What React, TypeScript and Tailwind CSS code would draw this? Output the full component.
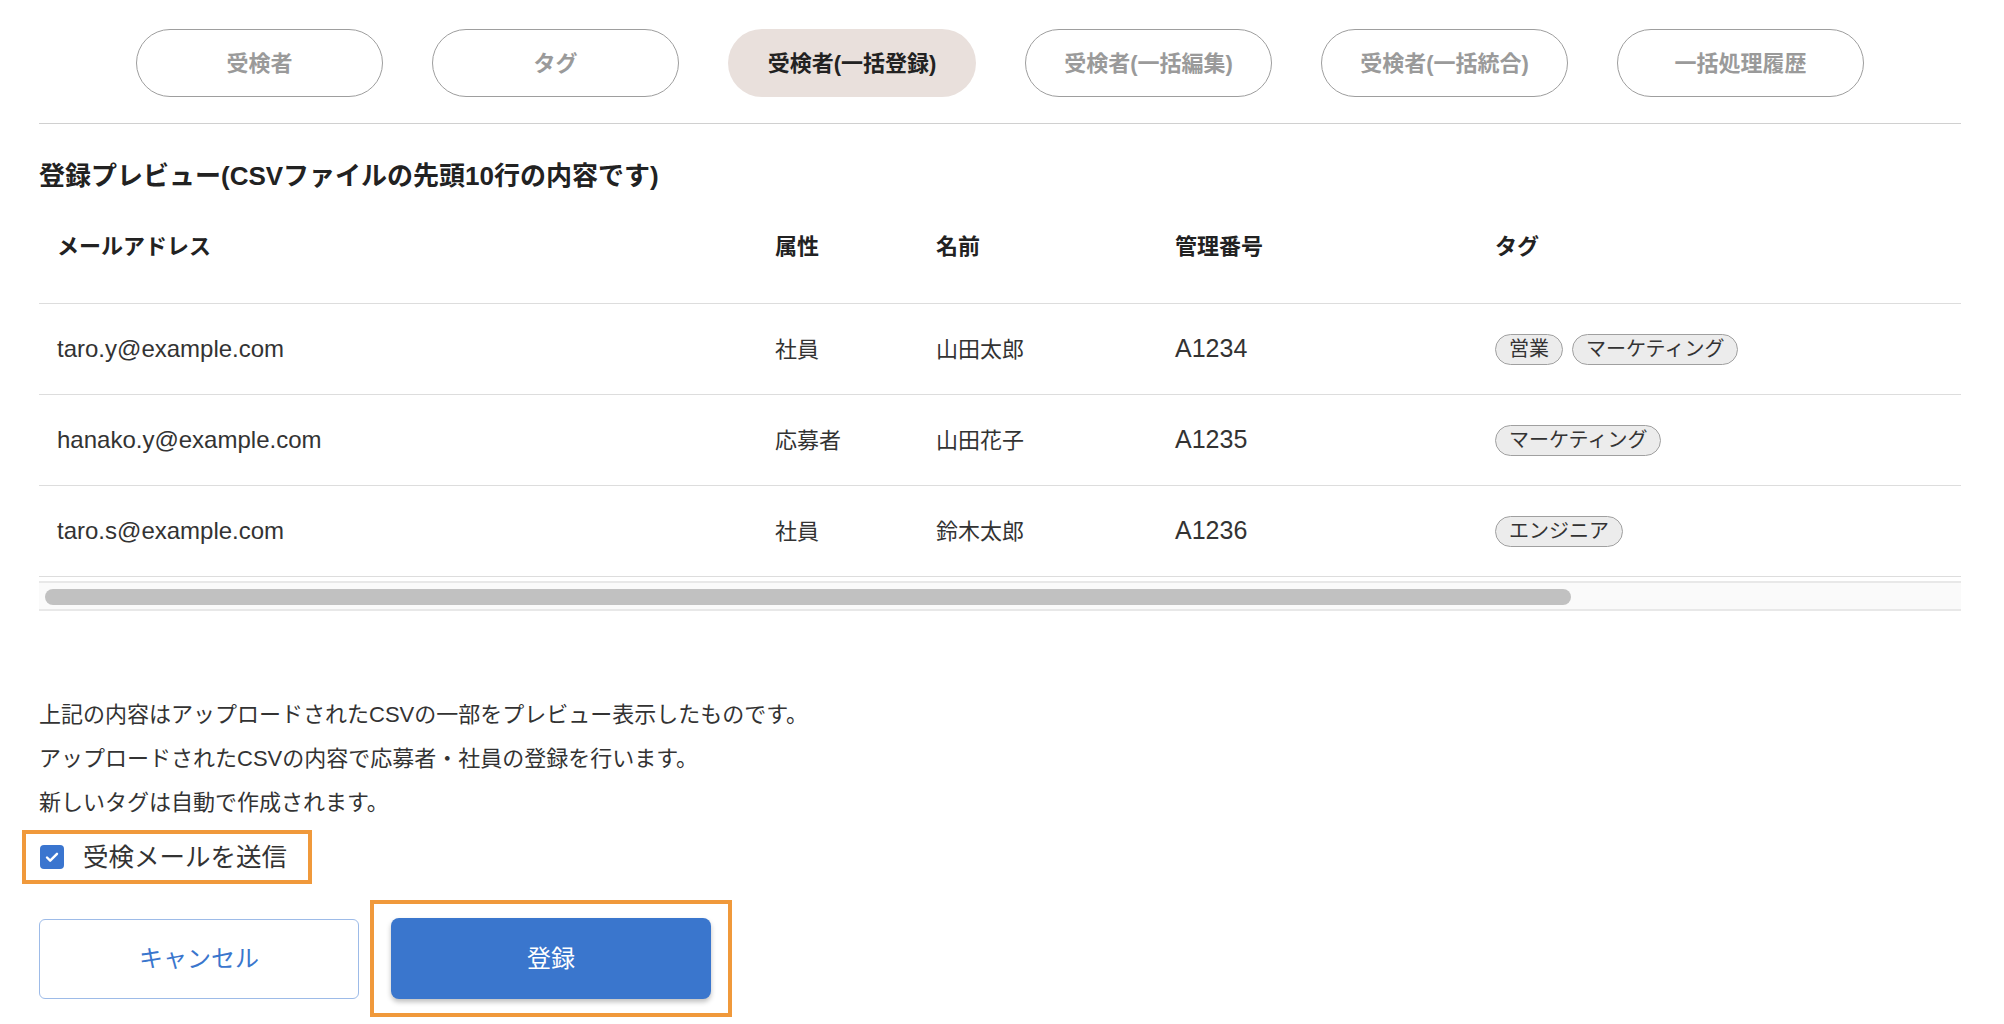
const font = { fontFamily: '"Liberation Sans", "Noto Sans CJK JP", sans-serif' };

const tabs = ['受検者', 'タグ', '受検者(一括登録)', '受検者(一括編集)', '受検者(一括統合)', '一括処理履歴'];

type Row = { email: string; kind: string; name: string; code: string; tags: string[] };

const rows: Row[] = [
  { email: 'taro.y@example.com', kind: '社員', name: '山田太郎', code: 'A1234', tags: ['営業', 'マーケティング'] },
  { email: 'hanako.y@example.com', kind: '応募者', name: '山田花子', code: 'A1235', tags: ['マーケティング'] },
  { email: 'taro.s@example.com', kind: '社員', name: '鈴木太郎', code: 'A1236', tags: ['エンジニア'] },
];

function Tabs() {
  return (
    <div className="flex justify-center gap-[49px] pt-[29px] pb-[26px] border-b border-[#d0d0d0]">
      {tabs.map((t, i) =>
        i === 2 ? (
          <div
            key={t}
            className="flex h-[68px] w-[248px] items-center justify-center rounded-full bg-[#e9e0dc] text-[22px] font-bold text-[#222]"
          >
            {t}
          </div>
        ) : (
          <div
            key={t}
            className="flex h-[68px] w-[247px] items-center justify-center rounded-full border border-[#9e9e9e] text-[22px] font-bold text-[#9a9a9a]"
          >
            {t}
          </div>
        ),
      )}
    </div>
  );
}

function Cols({ cells, className }: { cells: React.ReactNode[]; className: string }) {
  return (
    <div className={`flex items-center ${className}`}>
      <div className="w-[718px] pl-[18px]">{cells[0]}</div>
      <div className="w-[161px] pl-[18px]">{cells[1]}</div>
      <div className="w-[240px] pl-[18px]">{cells[2]}</div>
      <div className="w-[321px] pl-[17px]">{cells[3]}</div>
      <div className="flex-1 pl-[16px]">{cells[4]}</div>
    </div>
  );
}

function Chip({ label }: { label: string }) {
  return (
    <span className="inline-flex h-[31px] items-center rounded-full border border-[#a0a0a0] bg-[#ececec] px-[13px] text-[20px] leading-none text-[#333]">
      {label}
    </span>
  );
}

function Preview() {
  return (
    <div>
      <h2 className="mt-[33px] text-[26px] font-bold leading-[39px] text-[#222]">
        登録プレビュー(CSVファイルの先頭10行の内容です)
      </h2>
      <Cols
        className="h-[107px] pb-[6px] text-[22px] font-bold text-[#222]"
        cells={['メールアドレス', '属性', '名前', '管理番号', 'タグ']}
      />
      {rows.map((r) => (
        <Cols
          key={r.email}
          className="h-[91px] border-t border-[#dddddd] text-[22px] text-[#333]"
          cells={[
            <span className="text-[24px]">{r.email}</span>,
            r.kind,
            r.name,
            <span className="text-[25px]">{r.code}</span>,
            <div className="flex gap-[9px]">
              {r.tags.map((t) => (
                <Chip key={t} label={t} />
              ))}
            </div>,
          ]}
        />
      ))}
      <div className="border-t border-[#dddddd] pt-[4px]">
        <div className="h-[30px] border-y-2 border-[#e8e8e8] bg-[#fafafa] pl-[6px] pt-[6px]">
          <div className="h-[16px] w-[1526px] rounded-full bg-[#c1c1c1]" />
        </div>
      </div>
    </div>
  );
}

function Footer() {
  return (
    <div className="mt-[82px]">
      <div className="text-[22px] leading-[44px] text-[#333]">
        <p>上記の内容はアップロードされたCSVの一部をプレビュー表示したものです。</p>
        <p>アップロードされたCSVの内容で応募者・社員の登録を行います。</p>
        <p>新しいタグは自動で作成されます。</p>
      </div>
      <label className="-ml-[17px] mt-[5px] flex h-[54px] w-[290px] items-center gap-[19px] border-4 border-[#f0993b] pl-[14px]">
        <span className="flex h-[24px] w-[24px] items-center justify-center rounded-[4px] bg-[#3a75cf]">
          <svg width="16" height="16" viewBox="0 0 16 16" fill="none">
            <path d="M3 8.5l3.2 3.2L13 4.8" stroke="white" strokeWidth="2.4" strokeLinecap="round" strokeLinejoin="round" />
          </svg>
        </span>
        <span className="text-[25.5px] text-[#333]">受検メールを送信</span>
      </label>
      <div className="mt-[16px] flex items-center gap-[11px]">
        <button
          type="button"
          className="h-[80px] w-[320px] rounded-[6px] border-[1.5px] border-[#9dbbe8] bg-white text-[24px] text-[#3a76cd]"
        >
          キャンセル
        </button>
        <div className="border-4 border-[#f0993b] px-[17px] py-[14px]">
          <button
            type="button"
            className="h-[81px] w-[320px] rounded-[8px] bg-[#3a76cd] text-[24px] text-white shadow-[0_3px_5px_rgba(0,0,0,0.25)]"
          >
            登録
          </button>
        </div>
      </div>
    </div>
  );
}

export default function App() {
  return (
    <div className="min-h-screen bg-white" style={font}>
      <div className="ml-[39px] w-[1922px]">
        <Tabs />
        <Preview />
        <Footer />
      </div>
    </div>
  );
}
